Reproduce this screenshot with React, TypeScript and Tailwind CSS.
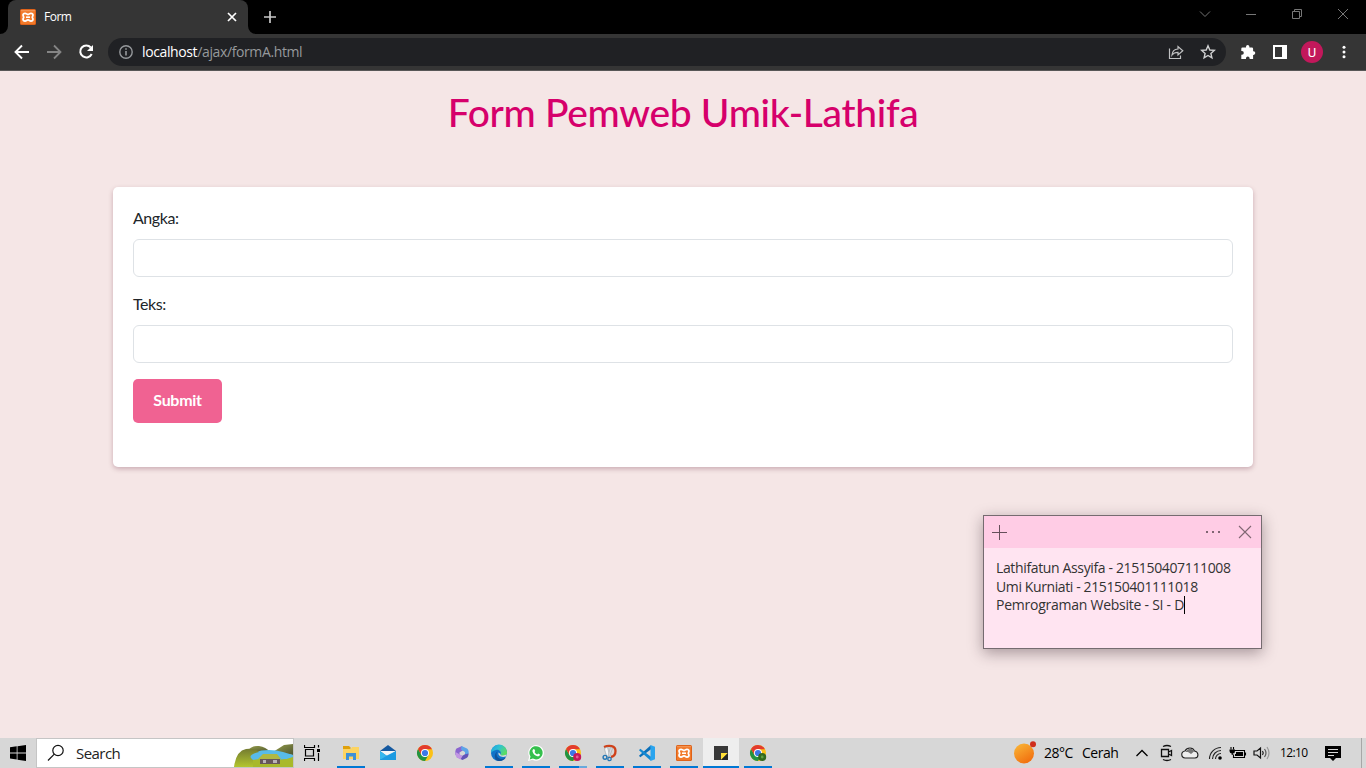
import type { ReactNode } from "react";

function Xampp({ className }: { className: string }) {
  return (
    <svg viewBox="0 0 16 16" className={className}>
      <rect width="16" height="16" rx="1.6" fill="#d95d16" />
      <rect x="0.8" y="0.8" width="14.4" height="14.4" rx="1" fill="#f27a2a" />
      <path d="M0.8 1.700h14.4" stroke="#f7a871" strokeWidth="0.7" />
      <path
        d="M5.1 4.300c1.300 0 1.500 1.200 2.900 1.200s1.600-1.200 2.900-1.200c1.600 0 2.300 1.100 2 2.300-.2.7-.6 1-.6 1.600s.4.900.6 1.600c.3 1.200-.4 2.300-2 2.300-1.300 0-1.500-1.200-2.900-1.200s-1.600 1.200-2.900 1.200c-1.600 0-2.300-1.100-2-2.300.2-.7.6-1 .6-1.600s-.4-.9-.6-1.600c-.3-1.200.4-2.300 2-2.300z"
        fill="#f27a2a"
        stroke="#fff"
        strokeWidth="1.800"
      />
      <path d="M6 8.200h4" stroke="#fff" strokeWidth="1.600" />
    </svg>
  );
}

function Chrome({ badge, dot }: { badge?: string; dot?: string }) {
  return (
    <svg viewBox="0 0 18 18" className="size-[18px] overflow-visible">
      <circle cx="9" cy="9" r="8" fill="#fbc116" />
      <path d="M2.070 5A8 8 0 0 0 9 17L12.500 11L9 9L5.500 11z" fill="#229342" />
      <path d="M2.070 5L5.500 11L9 5.200H15.930A8 8 0 0 0 2.070 5z" fill="#e33b2e" />
      <circle cx="9" cy="9" r="4" fill="#fff" />
      <circle cx="9" cy="9" r="3.100" fill="#3b78e7" />
      {badge && <circle cx="13.200" cy="13" r="4" fill={badge} />}
      {badge && <circle cx="13.200" cy="13" r="1.400" fill={dot} />}
    </svg>
  );
}

function Folder() {
  return (
    <svg viewBox="0 0 18 18" className="size-[18px]">
      <path d="M1 2h6l1.500 1.500V6H1z" fill="#e0a10c" />
      <path d="M1 5h8l1-2h7v12H1z" fill="#fcd462" />
      <path d="M4 16V9h10v7h-3v-3.500H7V16z" fill="#3d91d8" />
    </svg>
  );
}

function Mail() {
  return (
    <svg viewBox="0 0 18 18" className="size-[18px]">
      <path d="M1 7l8-6 8 6v9H1z" fill="#1559a0" />
      <path d="M1 7h16l-8 6z" fill="#f4f5f6" />
      <path d="M1 7l8 5.500L1 16z" fill="#35b7ee" />
      <path d="M17 7l-9 4.500L1 16h16z" fill="#1c9be2" />
    </svg>
  );
}

function Office() {
  return (
    <svg viewBox="0 0 18 18" className="size-[18px]">
      <path d="M9 2L3.500 4.500C2.500 5.500 2 8 2.500 11l4 2V8.500L10.500 6z" fill="#8a65cf" />
      <path d="M8.500 2l5.500 2.500c1.500 1 2 3 1.500 6L12 12V8L8 5.500z" fill="#5da4e8" />
      <path d="M15.500 9.500c0 2-.5 3.500-2 4.500L9.500 16l-6-3 3-2.500L9 12l3-1.700z" fill="#6454b8" />
      <path d="M2.500 8c0 3 .3 4.700 1.500 5.500L7.500 15.500l2-3.500L6 10z" fill="#c296e3" />
    </svg>
  );
}

function Edge() {
  return (
    <svg viewBox="0 0 18 18" className="size-[18px]">
      <defs>
        <linearGradient id="edgeTop" x1="0" y1="0" x2="1" y2="0.5">
          <stop offset="0" stopColor="#1b9de2" />
          <stop offset="0.5" stopColor="#2fc2d2" />
          <stop offset="1" stopColor="#5bdd62" />
        </linearGradient>
      </defs>
      <circle cx="9" cy="9" r="8" fill="#1173c9" />
      <path d="M1 9A8 8 0 0 1 17 8c.4 3-2 4-4 4-1.500 0-3-.5-2.500-1.500C12 8 9 5 6 6 3.500 6.500 1.500 8 1 9z" fill="url(#edgeTop)" />
      <path d="M8 7.500C6 8.500 6 12 8.500 14c2.500 1.500 5 1 7.500-.700A8 8 0 0 1 8 17C4 16 3.500 9 8 7.500z" fill="#12529a" />
      <path d="M8.500 8.500c-.7 3 2.500 5.500 7.500 4l1-2-4 1c-2 0-3-.500-2.500-1.500z" fill="#d8dadb" />
    </svg>
  );
}

function WhatsApp() {
  return (
    <svg viewBox="0 0 18 18" className="size-[18px]">
      <path d="M1 17l1.300-4.300A7.800 7.800 0 1 1 5.500 15.800z" fill="#fff" />
      <path d="M2.700 15.400l.8-3A6.600 6.600 0 1 1 5.900 14.600z" fill="#35c04d" />
      <path d="M6.200 5.300l1-.3 1 2-.7 1c.7 1.300 1.400 1.900 2.700 2.500l.9-1 1.900 1c0 1.500-1.500 2-2.700 1.700C7.800 11.600 6 9.700 5.500 7.500 5.400 6.600 5.700 5.700 6.200 5.300z" fill="#fff" />
    </svg>
  );
}

function Snip() {
  return (
    <svg viewBox="0 0 18 18" className="size-[18px]">
      <path d="M3 3c5-2.200 11.500-1.400 11.500 4 0 3.500-2 5.500-4.500 6" fill="none" stroke="#cf4119" strokeWidth="2.300" />
      <path d="M3.500 4.500L6.500 3l2.300 9-2.300 1C4.500 10 4 7 3.500 4.500z" fill="#f4f5f6" stroke="#969da3" strokeWidth="0.600" />
      <path d="M9.500 3l2 1.500-3 8.500-1.500-1z" fill="#d6dade" stroke="#969da3" strokeWidth="0.500" />
      <circle cx="4" cy="13.300" r="1.900" fill="none" stroke="#2477b5" strokeWidth="1.400" />
      <circle cx="8.500" cy="15" r="1.700" fill="none" stroke="#2477b5" strokeWidth="1.300" />
    </svg>
  );
}

function Code() {
  return (
    <svg viewBox="0 0 18 18" className="size-[18px]">
      <path d="M12.800 1.200L1 11.700l1.300 1.500L13 5.300z" fill="#0b6fb8" />
      <path d="M12.800 16.800L1 6.300l1.300-1.500L13 12.700z" fill="#1489d3" />
      <path d="M12.500 1L17 2.800v12.400L12.500 17z" fill="#2aa4ee" />
    </svg>
  );
}

function Sticky() {
  return (
    <svg viewBox="0 0 18 18" className="size-[18px]">
      <path d="M2 2h14v14H2z" fill="#383838" />
      <path d="M9 9h7l-7 7z" fill="#ffde36" />
      <path d="M9 16l7-7v7z" fill="#242424" />
    </svg>
  );
}

function TaskItem({ children, open, active, stacked }: { children: ReactNode; open?: boolean; active?: boolean; stacked?: boolean }) {
  return (
    <div className={active ? "flex h-[30px] w-9 flex-col items-center bg-[#eeeeee]" : "flex h-[30px] w-9 flex-col items-center"}>
      <div className="flex h-7 items-center pt-[2px]">{children}</div>
      {open && (
        <div className={active ? "flex h-[2px] w-9 bg-[#0078d4]" : "flex h-[2px] w-7 bg-[#0078d4]"}>
          {stacked && <div className="ml-auto w-2 bg-[#69a9dc]" />}
        </div>
      )}
    </div>
  );
}

function BrowserTabs() {
  return (
    <div className="flex h-[34px] bg-black">
      <svg viewBox="0 0 8 34" className="h-[34px] w-2"><path d="M0 34h8v-8a8 8 0 0 1-8 8z" fill="#353535" /></svg>
      <div className="flex h-[34px] w-60 items-center rounded-t-lg bg-[#353535] pl-3 text-white">
        <Xampp className="size-4" />
        <span className="ml-2 font-['Open_Sans',sans-serif] text-[12px] leading-4 tracking-[-0.5px]">Form</span>
        <svg viewBox="0 0 10 10" className="mr-[11px] ml-auto size-[10px]"><path d="M1 1l8 8M9 1L1 9" stroke="#fff" strokeWidth="1.700" /></svg>
      </div>
      <svg viewBox="0 0 8 34" className="h-[34px] w-2"><path d="M8 34H0v-8a8 8 0 0 0 8 8z" fill="#353535" /></svg>
      <svg viewBox="0 0 12 12" className="mt-[11px] ml-2 size-3"><path d="M6 0v12M0 6h12" stroke="#c8c8c8" strokeWidth="1.700" /></svg>
      <div className="mt-[8px] mr-[17px] ml-auto flex h-3 items-center gap-[34px]">
        <svg viewBox="0 0 12 12" className="size-3" fill="none" stroke="#737373"><path d="M1 3.500l5 5 5-5" /></svg>
        <svg viewBox="0 0 12 12" className="size-3"><path d="M1 6.500h10" stroke="#777" /></svg>
        <svg viewBox="0 0 12 12" className="size-3" fill="none" stroke="#777"><path d="M1.500 3.500h7v7h-7zM3.500 3.500v-2h7v7h-2" /></svg>
        <svg viewBox="0 0 12 12" className="size-3" fill="none" stroke="#777"><path d="M1 1l10 10M11 1L1 11" /></svg>
      </div>
    </div>
  );
}

function Toolbar() {
  return (
    <div className="flex h-[37px] items-center border-b border-[#575757] bg-[#353535]">
      <svg viewBox="0 0 16 16" className="ml-[14px] size-4" fill="none" stroke="#fff" strokeWidth="1.900"><path d="M15 8H2M8 1.500L1.500 8 8 14.500" /></svg>
      <svg viewBox="0 0 16 16" className="ml-4 size-4" fill="none" stroke="#858585" strokeWidth="1.800"><path d="M1 8h13M8 1.500L14.500 8 8 14.500" /></svg>
      <svg viewBox="0 0 16 16" className="ml-4 size-4" fill="none" stroke="#fff" strokeWidth="2"><path d="M12.800 3.500A6 6 0 1 0 13.700 10" /><path d="M15 1v6H9z" fill="#fff" stroke="none" /></svg>
      <div className="ml-[14px] flex h-7 w-[1118px] items-center rounded-full bg-[#202124] pl-[11px] font-['Open_Sans',sans-serif] text-[14px] leading-5 tracking-[-0.38px]">
        <svg viewBox="0 0 14 14" className="size-[14px]" fill="none" stroke="#96999c" strokeWidth="1.400"><circle cx="7" cy="7" r="6.200" /><path d="M7 6v4.500M7 3.300v1.500" strokeWidth="1.600" /></svg>
        <span className="ml-[9px] text-white">localhost</span><span className="text-[#96999c]">/ajax/formA.html</span>
        <svg viewBox="0 0 16 16" className="mr-4 ml-auto size-4" fill="none" stroke="#c0c1c2" strokeWidth="1.200"><path d="M1.500 4.500v10h11v-3M4 11c.3-3.700 2.200-5.800 6-6V2.500L14.800 6.800 10 11V8.300c-3 0-4.700.8-6 2.700z" /></svg>
        <svg viewBox="0 0 16 16" className="mr-[10px] size-4" fill="none" stroke="#d0d1d2" strokeWidth="1.400"><path d="M8 1.800l1.800 4.200 4.500.4-3.400 3 1 4.500L8 11.500l-3.900 2.400 1-4.500-3.400-3L6.200 6z" /></svg>
      </div>
      <svg viewBox="0 0 16 16" className="ml-[14px] size-4" fill="#fff"><path d="M2.500 3.500H6V2.700a1.700 1.700 0 0 1 3.400 0v.8h2.500a1.200 1.200 0 0 1 1.200 1.200v2.600h.4a1.800 1.800 0 0 1 0 3.600h-.4V15H9.600v-.7a1.800 1.800 0 0 0-3.600 0v.7H1.300v-4.300H2a1.800 1.800 0 0 0 0-3.600h-.7V4.700a1.200 1.200 0 0 1 1.200-1.200z" /></svg>
      <svg viewBox="0 0 14 14" className="ml-[17px] size-[14px]"><path d="M0 0h14v14H0z" fill="#fff" /><path d="M2 2h7v10H2z" fill="#353535" /></svg>
      <div className="ml-[14px] flex size-[22px] items-center justify-center rounded-full bg-[#c2185b] font-[Roboto,sans-serif] text-[13px] leading-none text-white">U</div>
      <svg viewBox="0 0 4 14" className="ml-[19px] h-[14px] w-1" fill="#fff"><circle cx="2" cy="2.200" r="1.500" /><circle cx="2" cy="7" r="1.500" /><circle cx="2" cy="11.800" r="1.500" /></svg>
    </div>
  );
}

function Field({ label }: { label: string }) {
  return (
    <label className="block h-[86px]">
      <span className="block h-8 leading-[22px] tracking-[-0.45px]">{label}</span>
      <input className="block h-[38px] w-full rounded-md border border-[#dee2e6] bg-white px-3" />
    </label>
  );
}

function Note() {
  return (
    <div className="absolute top-[444px] left-[983px] h-[134px] w-[279px] border border-[#756b70] bg-[#ffe4f1] shadow-[0_4px_14px_rgba(50,30,40,0.4)]">
      <div className="flex h-8 items-center bg-[#ffcce5] pr-[9px] pl-2">
        <svg viewBox="0 0 15 15" className="size-[15px]"><path d="M7.500 0v15M0 7.500h15" stroke="#654f5a" /></svg>
        <svg viewBox="0 0 16 4" className="ml-auto h-1 w-4" fill="#806673"><path d="M1 1h2v2H1zM7 1h2v2H7zM13 1h2v2h-2z" /></svg>
        <svg viewBox="0 0 14 14" className="ml-[17px] size-[14px]"><path d="M1 1l12 12M13 1L1 13" stroke="#806673" strokeWidth="1.100" /></svg>
      </div>
      <div className="pt-[11px] pl-3 font-['Open_Sans',sans-serif] text-[14px] leading-[18.500px] whitespace-nowrap text-[#333]">
        <p className="tracking-[-0.36px]">Lathifatun Assyifa - 215150407111008</p>
        <p className="tracking-[-0.39px]">Umi Kurniati - 215150401111018</p>
        <p className="flex tracking-[-0.25px]">Pemrograman Website - SI - D<span className="h-[18px] w-px bg-black" /></p>
      </div>
    </div>
  );
}

function SearchScene() {
  return (
    <svg viewBox="0 0 60 24" className="mt-auto ml-auto h-6 w-[60px]">
      <defs>
        <linearGradient id="grass" x1="0" y1="0" x2="0" y2="1"><stop offset="0" stopColor="#747b31" /><stop offset="1" stopColor="#b3c62e" /></linearGradient>
        <linearGradient id="hill" x1="0" y1="0" x2="1" y2="1"><stop offset="0" stopColor="#99a04c" /><stop offset="1" stopColor="#4e5630" /></linearGradient>
      </defs>
      <path d="M13 9Q19 2 26 3t11 6z" fill="url(#hill)" />
      <path d="M40 9L51 2l9-1v11z" fill="url(#hill)" />
      <path d="M14 12Q32 4 50 9l10 3v6H16z" fill="#58bbe9" />
      <path d="M1 24Q3 8 13 6q9-1 13 3c-10 2-11 6-4 9l38-2v8z" fill="url(#grass)" />
      <path d="M20 17q14-3 22-1t18-2v10H20z" fill="#a8b92b" />
      <path d="M27 15h20v6H27z" fill="#67575b" />
      <path d="M25 16l5-5h14l4 5z" fill="#b0b843" />
      <path d="M30 17h3v3h-3zM40 17h4v3h-4z" fill="#b9b3b8" />
    </svg>
  );
}

function Taskbar() {
  return (
    <div className="flex h-[30px] items-center bg-[#d7d7d7] font-['Open_Sans',sans-serif] text-black">
      <div className="flex w-9 justify-center">
        <svg viewBox="0 0 16 16" className="size-4"><path d="M0 2.300l6.700-1V7.500H0zM7.500 1.200L16 0v7.500H7.500zM0 8.400h6.700v6.200L0 13.600zM7.500 8.400H16V16l-8.500-1.200z" /></svg>
      </div>
      <div className="flex h-[30px] w-[258px] items-center border border-[#c5c5c5] bg-white">
        <svg viewBox="0 0 18 18" className="ml-[10px] size-[18px]" fill="none" stroke="#111" strokeWidth="1.200"><circle cx="11" cy="6.500" r="5.200" /><path d="M7.300 10.200L1 16.500" /></svg>
        <span className="ml-[11px] text-[15px] leading-5 tracking-[-0.55px] text-[#222]">Search</span>
        <SearchScene />
      </div>
      <svg viewBox="0 0 18 18" className="mr-[11px] ml-[10px] size-[18px]" fill="none" stroke="#000" strokeWidth="1.200"><path d="M.5 1v2.500h10V1M.5 17v-2.500h10V17M1.500 5.500h8v6.500h-8zM14.500 1v2.500M14.500 9V17" /><path d="M13 5h3v3h-3z" fill="#000" stroke="none" /></svg>
      <div className="flex gap-px">
        <TaskItem open><Folder /></TaskItem>
        <TaskItem><Mail /></TaskItem>
        <TaskItem><Chrome /></TaskItem>
        <TaskItem><Office /></TaskItem>
        <TaskItem open><Edge /></TaskItem>
        <TaskItem open><WhatsApp /></TaskItem>
        <TaskItem open stacked><Chrome badge="#c2185b" dot="#e55b90" /></TaskItem>
        <TaskItem open><Snip /></TaskItem>
        <TaskItem open><Code /></TaskItem>
        <TaskItem open><Xampp className="size-4" /></TaskItem>
        <TaskItem open active><Sticky /></TaskItem>
        <TaskItem open><Chrome badge="#33691e" dot="#5fa044" /></TaskItem>
      </div>
      <div className="ml-auto flex h-[30px] items-center text-[14px] leading-5 whitespace-nowrap">
        <svg viewBox="0 0 24 24" className="size-6">
          <defs><linearGradient id="sun" x1="0.2" y1="0" x2="0.8" y2="1"><stop offset="0" stopColor="#f9b335" /><stop offset="1" stopColor="#f16a0c" /></linearGradient></defs>
          <circle cx="11" cy="12.500" r="10" fill="url(#sun)" /><circle cx="20" cy="3.300" r="3" fill="#cf2d1b" />
        </svg>
        <span className="ml-[7px] w-[38px] tracking-[-0.5px]">28°C</span>
        <span className="w-[53px] tracking-[-0.5px]">Cerah</span>
        <svg viewBox="0 0 14 14" className="size-[14px]" fill="none" stroke="#000" strokeWidth="1.300"><path d="M1.500 10L7 4.500l5.500 5.500" /></svg>
        <svg viewBox="0 0 16 18" className="ml-[10px] h-[18px] w-4" fill="none" stroke="#111" strokeWidth="1.300"><path d="M2.500 5.500h7v7h-7zM9.500 8l3-1.500v5l-3-1.500M4 2.500q4-2 8 0M4 15.500q4 2 8 0" /></svg>
        <svg viewBox="0 0 18 14" className="ml-[6px] h-[14px] w-[18px]"><path d="M4.500 12A3.500 3.500 0 0 1 4 5C6 1 12 1 13.500 5 18 6 18 11.500 14 12z" fill="#eee" stroke="#222" strokeWidth="1.100" /><path d="M4.500 6C7 1.200 12 2 13 5.500L10 8 7 6z" fill="#777" /></svg>
        <svg viewBox="0 0 14 14" className="ml-[9px] size-[14px]" fill="none" stroke="#222" strokeWidth="1.100"><path d="M1.500 13A11.500 11.500 0 0 1 13 1.500M4.500 13A8.500 8.500 0 0 1 13 4.500M7.500 13A5.500 5.500 0 0 1 13 7.500" /><circle cx="12" cy="12" r="1.800" fill="#000" stroke="none" /></svg>
        <svg viewBox="0 0 18 14" className="ml-[7px] h-[14px] w-[18px]" fill="none" stroke="#000" strokeWidth="1.100"><path d="M6 4.500h9.500v7h-11V8.500M16.500 6.500v3M2 1v2.500M4.500 1v2.500" /><path d="M7 6h7v4H6V8h1zM.5 3.500h5.500v1.500Q6 7.500 3.800 7.500V9H2.700V7.500Q.5 7 .5 5z" fill="#000" stroke="none" /></svg>
        <svg viewBox="0 0 18 16" className="ml-[6px] h-4 w-[18px]" fill="none" stroke="#111" strokeWidth="1.200"><path d="M1 6h3l3.500-3v10L4 10H1zM9.500 6q1.500 2 0 4" /><path d="M11.500 4q3 4 0 8" stroke="#555" /><path d="M14 2q4 6 0 12" stroke="#999" /></svg>
        <span className="ml-[9px] w-[45px] text-[12px] tracking-[-0.65px]">12:10</span>
        <svg viewBox="0 0 16 16" className="size-4"><path d="M0 1h16v12h-5l-3 3-3-3H0z" /><path d="M3 4.500h10M3 7.500h10M3 10.500h6" stroke="#d7d7d7" /></svg>
        <div className="mr-1 ml-5 h-[30px] w-px bg-[#a7a7a7]" />
      </div>
    </div>
  );
}

export default function App() {
  return (
    <div className="flex h-[768px] w-[1366px] flex-col overflow-hidden">
      <BrowserTabs />
      <Toolbar />
      <main className="relative h-[667px] bg-[#f5e6e6] px-[113px] font-[Lato,sans-serif] text-[16px] text-[#212529]">
        <h1 className="flex h-[116px] justify-center pt-[17px] text-[39px] leading-[48px] font-medium tracking-[-0.330px] whitespace-nowrap text-[#d6006b]">Form Pemweb Umik-Lathifa</h1>
        <form className="h-[280px] rounded-[5px] bg-white px-5 pt-5 shadow-[0_2px_5px_rgba(80,0,30,0.25)]">
          <Field label="Angka:" />
          <Field label="Teks:" />
          <button type="button" className="block h-11 w-[89px] rounded-[5px] bg-[#f06292] pb-[2px] text-[16px] font-bold tracking-[-0.3px] text-white">Submit</button>
        </form>
        <Note />
      </main>
      <Taskbar />
    </div>
  );
}
